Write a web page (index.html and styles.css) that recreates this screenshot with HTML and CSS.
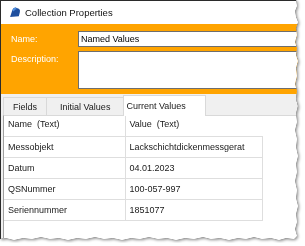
FILE: index.html
```html
<!DOCTYPE html>
<html lang="de">
<head>
  <meta charset="UTF-8" />
  <title>Collection Properties</title>
  <link rel="stylesheet" href="styles.css">
</head>
<body>
  <div class="frame">
    <div class="window">
      <div class="titlebar">
        <svg class="app-icon" width="12" height="12" viewBox="0 0 11 11">
          <path d="M1 10 L3 4 Q4 1 6.5 1.5 L9 2.5 Q10.5 3.5 10 5.5 L9 9.5 Z" fill="#1f4f9e"/>
          <path d="M3 4 Q4 1 6.5 1.5 L7 3 Q5 3 4.5 5 Z" fill="#4f8fe0"/>
        </svg>
        <span>Collection Properties</span>
      </div>

      <div class="props">
        <div class="prop-row">
          <label class="prop-label">Name:</label>
          <div class="field">Named Values</div>
        </div>
        <div class="prop-row">
          <label class="prop-label">Description:</label>
          <div class="field field-multi"></div>
        </div>
      </div>

      <div class="tabs">
        <div class="tab">Fields</div>
        <div class="tab">Initial Values</div>
        <div class="tab active">Current Values</div>
      </div>

      <div class="panel">
        <table class="grid">
          <tr class="grid-head">
            <td class="col-name">Name&nbsp; (Text)</td>
            <td class="col-value">Value&nbsp; (Text)</td>
          </tr>
          <tr>
            <td>Messobjekt</td>
            <td>Lackschichtdickenmessgerat</td>
          </tr>
          <tr>
            <td>Datum</td>
            <td>04.01.2023</td>
          </tr>
          <tr>
            <td>QSNummer</td>
            <td>100-057-997</td>
          </tr>
          <tr>
            <td>Seriennummer</td>
            <td>1851077</td>
          </tr>
        </table>
      </div>
    </div>
  </div>
</body>
</html>
```

FILE: styles.css
```css
html, body {
  margin: 0;
  padding: 0;
  background-color: #fff;
  font-family: "Liberation Sans", Arial, sans-serif;
  font-size: 9px;
  color: #1a1a1a;
}

.frame {
  width: 300px;
  height: 243px;
  filter: drop-shadow(0 0 0.6px #222) drop-shadow(1px 1px 1.5px rgba(0, 0, 0, 0.45));
}

.window {
  width: 300px;
  height: 243px;
  overflow: hidden;
  background-color: #f0f0f0;
  border-top: 1px solid #2b2b2b;
  border-left: 1px solid #2b2b2b;
  box-sizing: border-box;
  display: flex;
  flex-direction: column;
  clip-path: polygon(
    0 0, 296px 0, 297px 6px, 295px 11px, 296px 17px, 298px 22px, 296px 28px,
    297px 35px, 295px 42px, 297px 48px, 296px 55px, 298px 61px, 296px 68px,
    297px 76px, 295px 84px, 297px 91px, 296px 99px, 298px 106px, 296px 114px,
    297px 122px, 295px 130px, 297px 139px, 296px 147px, 298px 156px, 296px 164px,
    297px 172px, 295px 181px, 297px 190px, 296px 198px, 298px 206px, 296px 214px,
    297px 222px, 295px 229px, 297px 236px, 294px 239px,
    286px 238px, 279px 240px, 271px 238px, 262px 239px, 254px 237px, 246px 239px,
    238px 238px, 229px 240px, 220px 238px, 211px 239px, 203px 237px, 194px 239px,
    185px 238px, 176px 240px, 167px 238px, 158px 239px, 149px 237px, 140px 239px,
    131px 238px, 122px 240px, 113px 238px, 104px 239px, 95px 237px, 86px 239px,
    77px 238px, 68px 240px, 59px 238px, 50px 239px, 41px 237px, 32px 239px,
    23px 238px, 14px 240px, 6px 238px, 0 239px
  );
}

.titlebar {
  height: 23px;
  display: flex;
  align-items: center;
  gap: 4px;
  padding-left: 8px;
  background-color: #fff;
  font-size: 9.5px;
  color: #111;
}

.app-icon {
  display: block;
  margin-top: -1px;
}

.props {
  height: 70px;
  padding-top: 7px;
  box-sizing: border-box;
  background-color: #ffa400;
  display: flex;
  flex-direction: column;
  gap: 4px;
}

.prop-row {
  display: flex;
  align-items: flex-start;
}

.prop-label {
  flex-shrink: 0;
  width: 67px;
  padding-left: 10px;
  padding-top: 3px;
  color: #fff;
}

.field {
  flex-shrink: 0;
  width: 240px;
  height: 16px;
  box-sizing: border-box;
  padding: 2px 2px;
  background-color: #fff;
  border: 1px solid #6e6e6e;
  line-height: 11px;
  color: #000;
}

.field-multi {
  height: 38px;
}

.tabs {
  height: 21px;
  display: flex;
  align-items: flex-end;
  padding-left: 2px;
}

.tab {
  height: 18px;
  box-sizing: border-box;
  display: flex;
  align-items: center;
  border: 1px solid #d9d9d9;
  border-bottom: none;
  border-right: none;
  background-color: #f0f0f0;
  color: #1a1a1a;
}

.tab:first-child {
  padding: 0 9px;
}

.tab:nth-child(2) {
  padding: 0 13px;
}

.tab.active {
  height: 21px;
  padding: 0 19px 0 2px;
  background-color: #fff;
  border-right: 1px solid #d9d9d9;
  position: relative;
  top: 1px;
}

.panel {
  flex: 1;
  margin-left: 2px;
  background-color: #fff;
  border-top: 1px solid #d9d9d9;
  border-left: 1px solid #a0a0a0;
}

.grid {
  border-collapse: collapse;
  width: 259px;
}

.grid td {
  height: 21px;
  padding: 0 0 0 4px;
  border-bottom: 1px solid #dedede;
  border-right: 1px solid #dedede;
  box-sizing: border-box;
  white-space: nowrap;
}

.grid-head td {
  height: 20px;
  padding-bottom: 4px;
}

.grid-head td.col-value {
  border-right: none;
}

.col-name {
  width: 121px;
}
```
